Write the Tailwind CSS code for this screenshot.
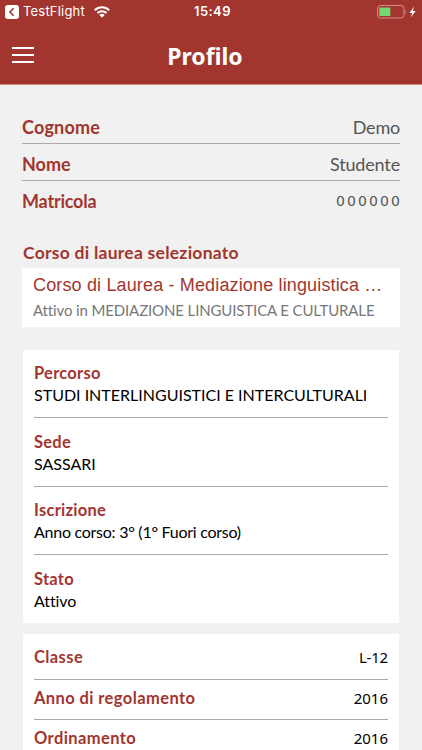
<!doctype html>
<html lang="it">
  <head>
    <meta charset="utf-8" />
    <meta name="viewport" content="width=device-width, initial-scale=1.0" />
    <script src="https://cdn.jsdelivr.net/npm/@tailwindcss/browser@4"></script>
    <title>Profilo</title>
  </head>
  <body
    class="h-[750px] overflow-hidden bg-[#f1f1f1] font-[Lato,sans-serif] text-black"
  >
    <header class="h-[85px] border-b border-[#c98a86] bg-[#a2362e] text-white">
      <div
        class="grid h-6 grid-cols-3 items-center pr-[5px] pl-[5px] font-[Inter,sans-serif] text-[13px]"
      >
        <div class="flex items-center">
          <svg class="h-[14px] w-[14px]" viewBox="0 0 14 14">
            <rect width="14" height="14" rx="3" fill="#fff" />
            <path
              d="M8.6 3.3 5 7l3.6 3.7"
              fill="none"
              stroke="#a2362e"
              stroke-width="1.6"
            />
          </svg>
          <span class="ml-[4px] tracking-[0.2px]">TestFlight</span>
          <svg class="ml-[9px] h-[12px] w-[16px]" viewBox="0 0 16 12">
            <g fill="none" stroke="#fff" stroke-width="2">
              <path d="M.8 4.2a10.3 10.3 0 0 1 14.4 0" />
              <path d="M3.4 7a6.6 6.6 0 0 1 9.2 0" />
            </g>
            <path d="M5.4 9a3.8 3.8 0 0 1 5.2 0L8 11.7z" fill="#fff" />
          </svg>
        </div>
        <span class="pl-[3px] text-center font-semibold tracking-[0.4px]"
          >15:49</span
        >
        <svg class="h-[14px] w-[40px] justify-self-end" viewBox="0 0 40 14">
          <rect
            x=".5"
            y=".5"
            width="26.5"
            height="12.5"
            rx="3"
            fill="none"
            stroke="#cf918c"
          />
          <rect x="2.3" y="2.5" width="11" height="8.5" fill="#74d870" />
          <path d="M28.4 4.5q1.6 2.2 0 4.4z" fill="#cf918c" />
          <path d="M37 1.5 32.5 8h2.7l-1.4 4.4L38.6 6h-2.9z" fill="#fff" />
        </svg>
      </div>
      <div class="relative flex h-[60px] items-center justify-center">
        <button
          type="button"
          aria-label="Menu"
          class="absolute top-[23px] left-[12px] flex flex-col gap-[5px]"
        >
          <span class="block h-[2px] w-[22px] bg-white"></span>
          <span class="block h-[2px] w-[22px] bg-white"></span>
          <span class="block h-[2px] w-[22px] bg-white"></span>
        </button>
        <h1
          class="pt-[5px] pr-3 font-['Noto_Sans',sans-serif] text-[23px] font-bold"
        >
          Profilo
        </h1>
      </div>
    </header>
    <main class="px-[22px] pt-[22px]">
      <dl class="text-[18px] text-[#555]">
        <div
          class="flex h-[37px] items-center justify-between border-b border-[#aaa] pt-[4px]"
        >
          <dt class="font-bold tracking-[0.2px] text-[#a2362e]">Cognome</dt>
          <dd class="tracking-[-0.2px]">Demo</dd>
        </div>
        <div
          class="flex h-[37px] items-center justify-between border-b border-[#aaa] pt-[4px]"
        >
          <dt class="font-bold text-[#a2362e]">Nome</dt>
          <dd class="tracking-[-0.15px]">Studente</dd>
        </div>
        <div class="flex h-[37px] items-center justify-between pt-[4px]">
          <dt class="font-bold tracking-[-0.2px] text-[#a2362e]">Matricola</dt>
          <dd
            class="-mr-[2px] font-['DejaVu_Sans',sans-serif] text-[14px] tracking-[2.1px]"
          >
            000000
          </dd>
        </div>
      </dl>
      <h2
        class="mt-[20px] ml-px h-[30px] text-[17.5px] leading-[30px] font-bold tracking-[0.26px] text-[#a2362e]"
      >
        Corso di laurea selezionato
      </h2>
      <section class="h-[59px] bg-white px-[11px] pt-[4px] whitespace-nowrap">
        <p
          class="font-['Liberation_Sans',sans-serif] text-[18px] leading-[26px] tracking-[0.15px] text-[#a2362e]"
        >
          Corso di Laurea - Mediazione linguistica …
        </p>
        <p class="text-[15px] leading-[25px] tracking-[-0.13px] text-[#777]">
          Attivo in MEDIAZIONE LINGUISTICA E CULTURALE
        </p>
      </section>
      <section
        class="mt-[23px] mr-px ml-px h-[273px] bg-white px-[11px] text-[16px] leading-[22px] whitespace-nowrap"
      >
        <div class="h-[68px] border-b border-[#aaa] pt-[12px]">
          <h3 class="text-[16.5px] font-bold tracking-[0.25px] text-[#a2362e]">
            Percorso
          </h3>
          <p>STUDI INTERLINGUISTICI E INTERCULTURALI</p>
        </div>
        <div class="h-[69px] border-b border-[#aaa] pt-[13px]">
          <h3 class="text-[16.5px] font-bold tracking-[0.25px] text-[#a2362e]">
            Sede
          </h3>
          <p>SASSARI</p>
        </div>
        <div class="h-[68px] border-b border-[#aaa] pt-[12px]">
          <h3 class="text-[16.5px] font-bold tracking-[0.25px] text-[#a2362e]">
            Iscrizione
          </h3>
          <p class="tracking-[-0.26px]">Anno corso: 3° (1° Fuori corso)</p>
        </div>
        <div class="h-[68px] pt-[13px]">
          <h3 class="text-[16.5px] font-bold tracking-[0.25px] text-[#a2362e]">
            Stato
          </h3>
          <p class="tracking-[-0.1px]">Attivo</p>
        </div>
      </section>
      <dl
        class="mt-[11px] mr-px ml-px bg-white px-[11px] pt-[5px] text-[16.5px] tracking-[0.4px]"
      >
        <div
          class="flex h-[41px] items-center justify-between border-b border-[#aaa] pb-[3px]"
        >
          <dt class="font-bold text-[#a2362e]">Classe</dt>
          <dd class="font-['Noto_Sans',sans-serif] text-[15px] tracking-[-0.2px]">
            L-12
          </dd>
        </div>
        <div
          class="flex h-[40px] items-center justify-between border-b border-[#aaa] pb-[3px]"
        >
          <dt class="font-bold text-[#a2362e]">Anno di regolamento</dt>
          <dd class="font-['Noto_Sans',sans-serif] text-[15px] tracking-normal">
            2016
          </dd>
        </div>
        <div class="flex h-[40px] items-center justify-between pb-[3px]">
          <dt class="font-bold text-[#a2362e]">Ordinamento</dt>
          <dd class="font-['Noto_Sans',sans-serif] text-[15px] tracking-normal">
            2016
          </dd>
        </div>
      </dl>
    </main>
  </body>
</html>
